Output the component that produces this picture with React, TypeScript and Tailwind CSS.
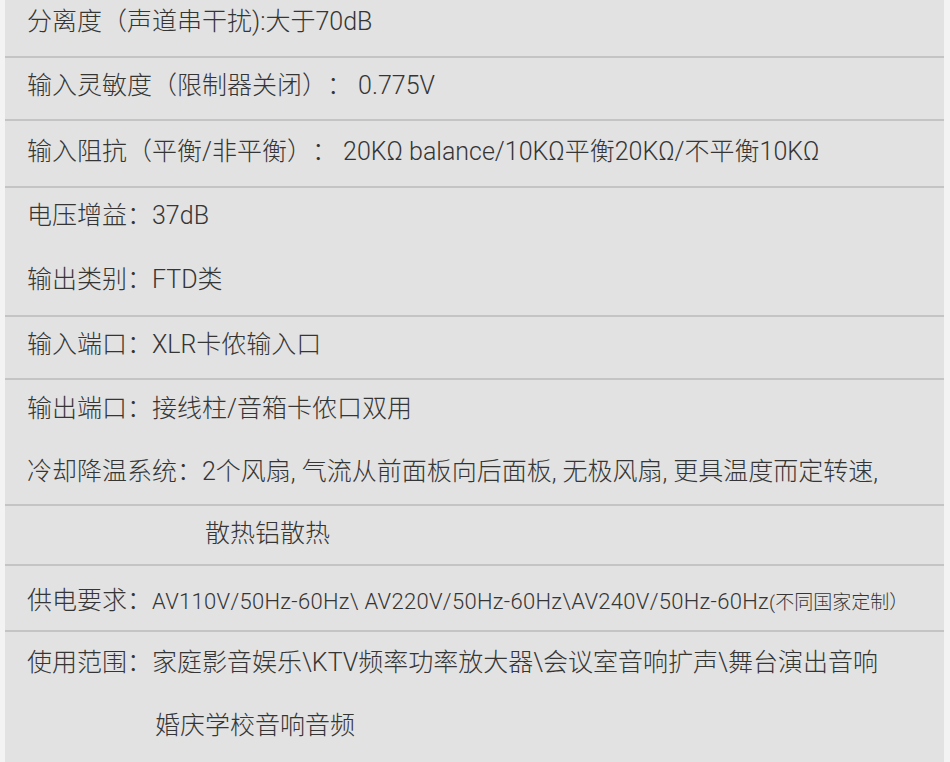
import React from "react";

type Line = { mt: string; content: React.ReactNode };
type Block = { h: string; border: boolean; lines: Line[] };

const blocks: Block[] = [
  { h: "h-[56px]", border: true, lines: [{ mt: "mt-[5px]", content: "分离度（声道串干扰):大于70dB" }] },
  { h: "h-[61px]", border: true, lines: [{ mt: "mt-[11px]", content: "输入灵敏度（限制器关闭）： 0.775V" }] },
  {
    h: "h-[65px]",
    border: true,
    lines: [{ mt: "mt-[14px]", content: "输入阻抗（平衡/非平衡）： 20KΩ balance/10KΩ平衡20KΩ/不平衡10KΩ" }],
  },
  {
    h: "h-[127px]",
    border: true,
    lines: [
      { mt: "mt-[11px]", content: "电压增益：37dB" },
      { mt: "mt-[30px]", content: "输出类别：FTD类" },
    ],
  },
  { h: "h-[61px]", border: true, lines: [{ mt: "mt-[11px]", content: "输入端口：XLR卡侬输入口" }] },
  {
    h: "h-[124px]",
    border: true,
    lines: [
      { mt: "mt-[12px]", content: "输出端口：接线柱/音箱卡侬口双用" },
      {
        mt: "mt-[29px]",
        content: (
          <>
            冷却降温系统：2个风扇,<span className="ml-[6px]">气流从前面板向后面板,</span>
            <span className="ml-[6px]">无极风扇,</span>
            <span className="ml-[6px]">更具温度而定转速,</span>
          </>
        ),
      },
    ],
  },
  {
    h: "h-[58px]",
    border: true,
    lines: [{ mt: "mt-[11px]", content: <span className="pl-[178px]">散热铝散热</span> }],
  },
  {
    h: "h-[64px]",
    border: true,
    lines: [
      {
        mt: "mt-[18px]",
        content: (
          <>
            供电要求：
            <span className="text-[22px] tracking-[0.3px]">
              AV110V/50Hz-60Hz\ AV220V/50Hz-60Hz\AV240V/50Hz-60Hz
            </span>
            <span className="text-[19px]">(不同国家定制）</span>
          </>
        ),
      },
    ],
  },
  {
    h: "h-[130px]",
    border: false,
    lines: [
      { mt: "mt-[14px]", content: "使用范围：家庭影音娱乐\\KTV频率功率放大器\\会议室音响扩声\\舞台演出音响" },
      { mt: "mt-[29px]", content: <span className="pl-[128px]">婚庆学校音响音频</span> },
    ],
  },
];

export default function App() {
  return (
    <div
      className="w-[950px] h-[762px] overflow-hidden bg-[#f3f3f3] flex pl-[5px] pr-[6px] [text-spacing-trim:space-all]"
      style={{ fontFamily: 'Roboto, "Noto Sans CJK SC", sans-serif' }}
    >
      <div className="flex-1 bg-[#e2e2e2] flex flex-col">
        {blocks.map((b, i) => (
          <div
            key={i}
            className={
              "box-content flex flex-col shrink-0 " +
              b.h +
              (b.border ? " border-b-2 border-[#c4c4c4]" : "")
            }
          >
            {b.lines.map((l, j) => (
              <div
                key={j}
                className={
                  "h-[34px] leading-[34px] pl-[22px] text-[25px] font-light text-[#353535] whitespace-nowrap " +
                  l.mt
                }
              >
                {l.content}
              </div>
            ))}
          </div>
        ))}
      </div>
    </div>
  );
}
